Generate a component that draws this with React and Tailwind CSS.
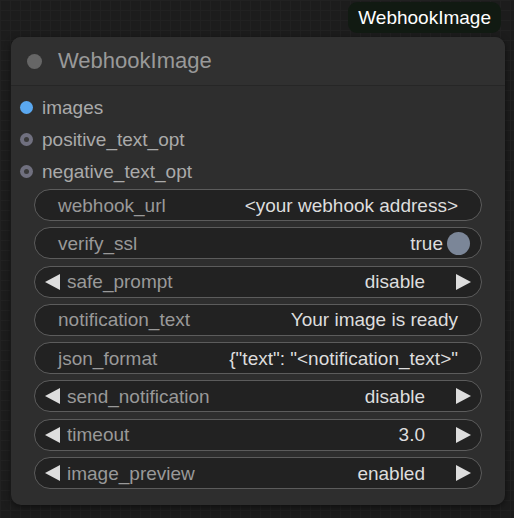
const inputs = [
  { name: 'images', kind: 'image' },
  { name: 'positive_text_opt', kind: 'opt' },
  { name: 'negative_text_opt', kind: 'opt' },
];

const widgets = [
  { label: 'webhook_url', value: '<your webhook address>', type: 'text' },
  { label: 'verify_ssl', value: 'true', type: 'toggle' },
  { label: 'safe_prompt', value: 'disable', type: 'combo' },
  { label: 'notification_text', value: 'Your image is ready', type: 'text' },
  { label: 'json_format', value: '{"text": "<notification_text>"', type: 'text' },
  { label: 'send_notification', value: 'disable', type: 'combo' },
  { label: 'timeout', value: '3.0', type: 'combo' },
  { label: 'image_preview', value: 'enabled', type: 'combo' },
];

function Arrow({ dir }) {
  return (
    <svg width="15" height="16" viewBox="0 0 15 16" className="shrink-0">
      {dir === 'left' ? (
        <polygon points="15,0 15,16 0,8" fill="#dddddd" />
      ) : (
        <polygon points="0,0 0,16 15,8" fill="#dddddd" />
      )}
    </svg>
  );
}

function Widget({ label, value, type }) {
  if (type === 'combo') {
    return (
      <div className="flex h-[32px] items-center rounded-full border border-[#5c5c5c] bg-[#222222] pl-[10px] pr-[10px]">
        <Arrow dir="left" />
        <span className="ml-[7px] text-[#999999]">{label}</span>
        <span className="ml-auto text-[#dddddd]">{value}</span>
        <span className="ml-[31px]">
          <Arrow dir="right" />
        </span>
      </div>
    );
  }
  if (type === 'toggle') {
    return (
      <div className="flex h-[32px] items-center rounded-full border border-[#5c5c5c] bg-[#222222] pl-[23px] pr-[11px]">
        <span className="text-[#999999]">{label}</span>
        <span className="ml-auto text-[#dddddd]">{value}</span>
        <span className="ml-[4px] size-[23px] rounded-full bg-[#7b8698]" />
      </div>
    );
  }
  return (
    <div className="flex h-[32px] items-center rounded-full border border-[#5c5c5c] bg-[#222222] px-[23px]">
      <span className="text-[#999999]">{label}</span>
      <span className="ml-auto whitespace-pre text-[#dddddd]">{value}</span>
    </div>
  );
}

export default function App() {
  return (
    <div
      className="h-[518px] w-[514px] overflow-hidden bg-[#1c1c1c] bg-[linear-gradient(#212121_1px,transparent_1px),linear-gradient(90deg,#212121_1px,transparent_1px)] bg-size-[10px_10px] text-[19px] leading-none"
      style={{ fontFamily: '"Liberation Sans", Arial, sans-serif' }}
    >
      <div className="flex justify-end pr-[13px] pt-[2px]">
        <div className="flex h-[31px] items-center rounded-[9px] bg-[#111a12] px-[10px] text-white">WebhookImage</div>
      </div>

      <div className="ml-[11px] mt-[4px] h-[468px] w-[494px] overflow-hidden rounded-[10px] bg-[#2e2e2e] shadow-[0_2px_6px_rgba(0,0,0,0.5)]">
        <div className="flex h-[49px] items-center border-b border-[#262626] bg-[#303030] pl-[16px]">
          <span className="size-[15px] rounded-full bg-[#666666]" />
          <span className="ml-[16px] text-[22px] text-[#999999]">WebhookImage</span>
        </div>

        <div className="flex flex-col pt-[5px]">
          {inputs.map((inp) => (
            <div key={inp.name} className="flex h-[32px] items-center pl-[9px]">
              {inp.kind === 'image' ? (
                <span className="size-[13px] rounded-full bg-[#5aa8f0]" />
              ) : (
                <span className="flex size-[13px] items-center justify-center rounded-full bg-[#70707f]">
                  <span className="size-[5px] rounded-full bg-[#3a3a3a]" />
                </span>
              )}
              <span className="ml-[9px] text-[#aaaaaa]">{inp.name}</span>
            </div>
          ))}
        </div>

        <div className="mx-[23px] mt-[2px] flex flex-col gap-[6.3px]">
          {widgets.map((w) => (
            <Widget key={w.label} {...w} />
          ))}
        </div>
      </div>
    </div>
  );
}
